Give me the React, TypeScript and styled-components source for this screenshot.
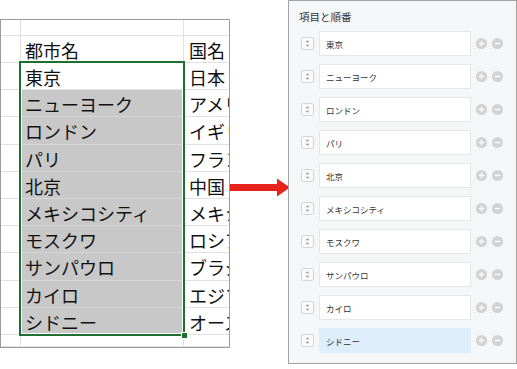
import { Fragment } from "react";
import styled, { createGlobalStyle } from "styled-components";

const GlobalStyle = createGlobalStyle`
  html, body {
    margin: 0;
    padding: 0;
    background: #ffffff;
  }
  body {
    font-family: "Noto Sans CJK JP", "Noto Sans", sans-serif;
  }
`;

interface ICity {
  city: string;
  country: string;
}

const cities: ICity[] = [
  { city: "東京", country: "日本" },
  { city: "ニューヨーク", country: "アメリカ" },
  { city: "ロンドン", country: "イギリス" },
  { city: "パリ", country: "フランス" },
  { city: "北京", country: "中国" },
  { city: "メキシコシティ", country: "メキシコ" },
  { city: "モスクワ", country: "ロシア" },
  { city: "サンパウロ", country: "ブラジル" },
  { city: "カイロ", country: "エジプト" },
  { city: "シドニー", country: "オーストラリア" },
];

const Page = styled.div`
  display: flex;
  align-items: flex-start;
  width: 517px;
  height: 369px;
  overflow: hidden;
`;

// 스프레드시트
const Sheet = styled.div`
  position: relative;
  box-sizing: border-box;
  margin-top: 19px;
  width: 230px;
  height: 329px;
  border: 1px solid #9c9c9c;
  overflow: hidden;
  display: grid;
  grid-template-columns: 20px 163px 60px;
  grid-template-rows: 16px 27px repeat(10, 27.2px) 1fr;
  background: #fff;
`;

const Cell = styled.div<{ $selected?: boolean }>`
  box-sizing: border-box;
  border-right: 1px solid #e1e1e1;
  border-bottom: 1px solid ${(p) => (p.$selected ? "#d6d6d6" : "#e1e1e1")};
  background: ${(p) => (p.$selected ? "#c8c8c8" : "#fff")};
  font-size: 18px;
  line-height: 26px;
  padding: 1px 0 0 4px;
  color: #111;
  white-space: nowrap;
  overflow: hidden;
`;

const CountryCell = styled(Cell)`
  padding-left: 5px;
  overflow: visible;
`;

const Selection = styled.div`
  position: absolute;
  left: 18px;
  top: 41px;
  width: 166px;
  height: 275px;
  box-sizing: border-box;
  border: 2px solid #1f6f30;
  box-shadow: inset 0 0 0 1px #fff;
  pointer-events: none;
`;

const FillHandle = styled.div`
  position: absolute;
  right: -5px;
  bottom: -5px;
  width: 5px;
  height: 5px;
  background: #1f6f30;
  border: 1px solid #fff;
`;

const ArrowBox = styled.div`
  width: 58px;
  margin-top: 178px;
  display: flex;
`;

// 설정 패널
const Panel = styled.div`
  box-sizing: border-box;
  width: 229px;
  height: 364px;
  border: 1px solid #a3a3a3;
  background: #f5f6f8;
  color: #333;
`;

const PanelTitle = styled.div`
  padding: 8px 0 0 10px;
  font-size: 10.5px;
  line-height: 15px;
  color: #333;
`;

const List = styled.div`
  display: flex;
  flex-direction: column;
  gap: 8px;
  padding: 7px 0 0 12px;
`;

const Row = styled.div`
  display: flex;
  align-items: center;
`;

const Input = styled.div<{ $active?: boolean }>`
  box-sizing: border-box;
  width: 152px;
  height: 25px;
  margin-left: 5px;
  padding-left: 6px;
  display: flex;
  align-items: center;
  font-size: 8.5px;
  color: #333;
  background: ${(p) => (p.$active ? "#dfeefb" : "#ffffff")};
  border: 1px solid ${(p) => (p.$active ? "#dfeefb" : "#e6e7ea")};
`;

const Actions = styled.div`
  display: flex;
  gap: 5px;
  margin-left: 5px;
`;

function Spinner() {
  return (
    <svg width="13" height="13" viewBox="0 0 13 13">
      <rect x="0.5" y="0.5" width="12" height="12" rx="2" fill="#fafafa" stroke="#d3d3d3" />
      <path d="M4.5 5.2 L6.5 3.2 L8.5 5.2 Z" fill="#9a9a9a" />
      <path d="M4.5 7.8 L6.5 9.8 L8.5 7.8 Z" fill="#9a9a9a" />
    </svg>
  );
}

function CircleBtn({ plus }: { plus?: boolean }) {
  return (
    <svg width="11" height="11" viewBox="0 0 11 11">
      <circle cx="5.5" cy="5.5" r="5.5" fill="#d2d2d2" />
      <rect x="2.8" y="4.8" width="5.4" height="1.4" fill="#fff" />
      {plus && <rect x="4.8" y="2.8" width="1.4" height="5.4" fill="#fff" />}
    </svg>
  );
}

export default function App() {
  return (
    <>
      <GlobalStyle />
      <Page>
        <Sheet>
          <Cell />
          <Cell />
          <CountryCell />
          <Cell />
          <Cell>都市名</Cell>
          <CountryCell>国名</CountryCell>
          {cities.map((v, i) => (
            <Fragment key={i}>
              <Cell />
              <Cell $selected={i > 0}>{v.city}</Cell>
              <CountryCell>{v.country}</CountryCell>
            </Fragment>
          ))}
          <Cell />
          <Cell />
          <CountryCell />
          <Selection>
            <FillHandle />
          </Selection>
        </Sheet>

        <ArrowBox>
          <svg width="60" height="19" viewBox="0 0 60 19" style={{ overflow: "visible" }}>
            <rect x="0" y="6" width="48" height="7" fill="#e8231b" />
            <path d="M47 0.5 L60 9.5 L47 18.5 Z" fill="#e8231b" />
          </svg>
        </ArrowBox>

        <Panel>
          <PanelTitle>項目と順番</PanelTitle>
          <List>
            {cities.map((v, i) => (
              <Row key={i}>
                <Spinner />
                <Input $active={i === cities.length - 1}>{v.city}</Input>
                <Actions>
                  <CircleBtn plus />
                  <CircleBtn />
                </Actions>
              </Row>
            ))}
          </List>
        </Panel>
      </Page>
    </>
  );
}
